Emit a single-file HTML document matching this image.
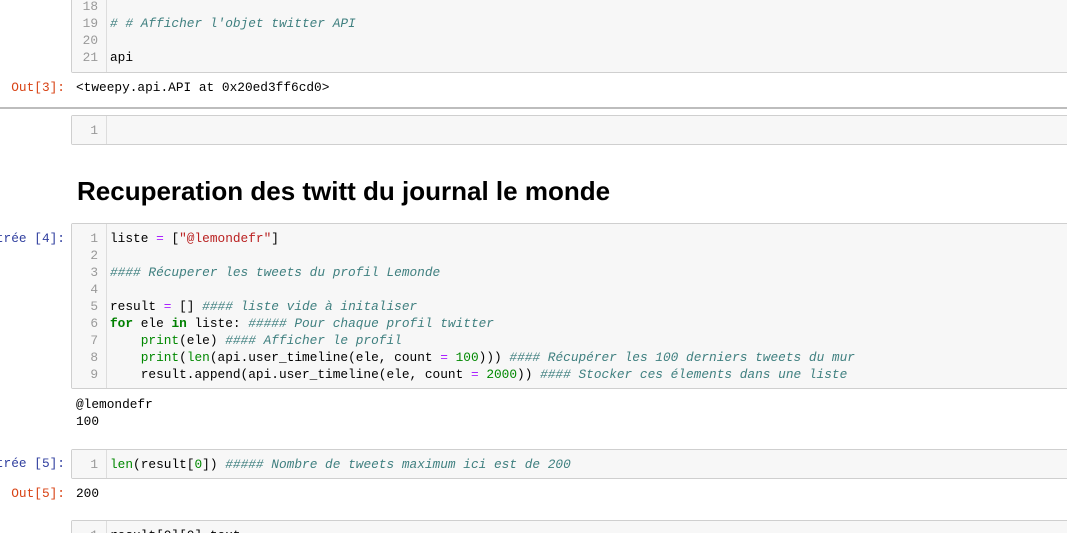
<!DOCTYPE html>
<html><head><meta charset="utf-8"><style>
html,body{margin:0;width:1067px;height:533px;overflow:hidden}
body{background:#fff;font-family:"Liberation Mono",monospace;font-size:12.8px;position:relative}
.cell{position:absolute;left:71px;width:1000px;background:#f7f7f7;border:1px solid #cfcfcf;border-radius:2px;box-sizing:border-box}
.gut{position:absolute;left:0;top:0;bottom:0;width:34px;border-right:1px solid #ddd;background:#f7f7f7}
.l{position:absolute;height:17px;line-height:17px;white-space:pre}
.ln{left:0;width:26px;color:#999;text-align:right}
.code{left:38px;color:#000}
.p{position:absolute;right:1002px;white-space:pre;line-height:17px}
.in{color:#303f9f}.out{color:#d84315}
.k{color:#008000;font-weight:bold}.o{color:#aa22ff}.s{color:#ba2121}.c{color:#408080;font-style:italic}.n{color:#080}
.txt{position:absolute;left:76px;white-space:pre;line-height:17px}
</style></head><body>
<div class="cell" style="top:-10px;height:83px">
<div class="gut"></div>
<div class="l ln" style="top:7px">18</div><div class="l ln" style="top:24px">19</div><div class="l ln" style="top:41px">20</div><div class="l ln" style="top:58px">21</div>
<div class="l code" style="top:24px"><span class="c"># # Afficher l'objet twitter API</span></div>
<div class="l code" style="top:58px">api</div>
</div>
<div class="p out" style="top:79px">Out[3]:</div>
<div class="txt" style="top:79px">&lt;tweepy.api.API at 0x20ed3ff6cd0&gt;</div>
<div style="position:absolute;left:0;top:107px;width:1067px;height:2px;background:#bdbdbd"></div>
<div class="cell" style="top:115px;height:30px"><div class="gut"></div><div class="l ln" style="top:6px">1</div></div>
<div style="position:absolute;left:77px;top:174px;font-family:'Liberation Sans',sans-serif;font-weight:bold;font-size:26px;line-height:34px">Recuperation des twitt du journal le monde</div>
<div class="p in" style="top:230px">trée [4]:</div>
<div class="cell" style="top:223px;height:166px"><div class="gut"></div>
<div class="l ln" style="top:6px">1</div><div class="l ln" style="top:23px">2</div><div class="l ln" style="top:40px">3</div><div class="l ln" style="top:57px">4</div><div class="l ln" style="top:74px">5</div><div class="l ln" style="top:91px">6</div><div class="l ln" style="top:108px">7</div><div class="l ln" style="top:125px">8</div><div class="l ln" style="top:142px">9</div>
<div class="l code" style="top:6px">liste <span class="o">=</span> [<span class="s">"@lemondefr"</span>]</div>
<div class="l code" style="top:40px"><span class="c">#### Récuperer les tweets du profil Lemonde</span></div>
<div class="l code" style="top:74px">result <span class="o">=</span> [] <span class="c">#### liste vide à initaliser</span></div>
<div class="l code" style="top:91px"><span class="k">for</span> ele <span class="k">in</span> liste: <span class="c">##### Pour chaque profil twitter</span></div>
<div class="l code" style="top:108px">    <span class="n">print</span>(ele) <span class="c">#### Afficher le profil</span></div>
<div class="l code" style="top:125px">    <span class="n">print</span>(<span class="n">len</span>(api.user_timeline(ele, count <span class="o">=</span> <span class="n">100</span>))) <span class="c">#### Récupérer les 100 derniers tweets du mur</span></div>
<div class="l code" style="top:142px">    result.append(api.user_timeline(ele, count <span class="o">=</span> <span class="n">2000</span>)) <span class="c">#### Stocker ces élements dans une liste</span></div>
</div>
<div class="txt" style="top:396px">@lemondefr
100</div>
<div class="p in" style="top:455px">trée [5]:</div>
<div class="cell" style="top:449px;height:30px"><div class="gut"></div><div class="l ln" style="top:6px">1</div>
<div class="l code" style="top:6px"><span class="n">len</span>(result[<span class="n">0</span>]) <span class="c">##### Nombre de tweets maximum ici est de 200</span></div></div>
<div class="p out" style="top:485px">Out[5]:</div>
<div class="txt" style="top:485px">200</div>
<div class="cell" style="top:520px;height:30px"><div class="gut"></div><div class="l ln" style="top:6px">1</div><div class="l code" style="top:6px">result[0][0].text</div></div>
</body></html>
